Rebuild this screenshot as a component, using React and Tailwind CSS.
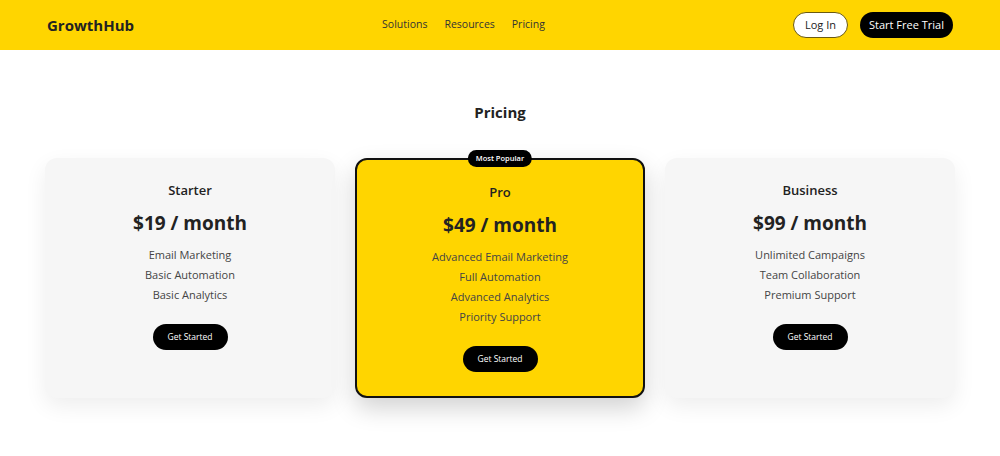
import React from 'react';

const font = { fontFamily: '"Open Sans", "Liberation Sans", sans-serif' };

const plans = [
  {
    name: 'Starter',
    price: '$19 / month',
    features: ['Email Marketing', 'Basic Automation', 'Basic Analytics'],
  },
  {
    name: 'Pro',
    price: '$49 / month',
    features: [
      'Advanced Email Marketing',
      'Full Automation',
      'Advanced Analytics',
      'Priority Support',
    ],
    popular: true,
  },
  {
    name: 'Business',
    price: '$99 / month',
    features: ['Unlimited Campaigns', 'Team Collaboration', 'Premium Support'],
  },
];

const PlanCard = ({ plan }) => {
  const base = plan.popular
    ? 'relative bg-[#ffd500] border-2 border-[#111] rounded-xl shadow-[0_10px_24px_rgba(0,0,0,0.18)] pt-[24px]'
    : 'relative bg-[#f6f6f6] rounded-xl shadow-[0_8px_22px_rgba(0,0,0,0.07)] pt-[24px]';

  return (
    <div className={`${base} flex flex-col items-center px-6 pb-6`}>
      {plan.popular && (
        <span className="absolute -top-[10px] left-1/2 -translate-x-1/2 bg-black text-white text-[7.5px] font-semibold rounded-full px-[8px] py-[3px] leading-[11px]">
          Most Popular
        </span>
      )}
      <h3 className="text-[13px] font-semibold text-[#222] leading-[17px]">
        {plan.name}
      </h3>
      <div className="mt-[10px] text-[19px] font-bold text-[#222] leading-[28px]">
        {plan.price}
      </div>
      <ul className="mt-[8px] flex flex-col items-center">
        {plan.features.map((f) => (
          <li key={f} className="text-[11px] text-[#444] leading-[20px]">
            {f}
          </li>
        ))}
      </ul>
      <button className="mt-[19px] bg-black text-white text-[8.5px] rounded-full w-[75px] h-[26px]">
        Get Started
      </button>
    </div>
  );
};

export default function App() {
  return (
    <div className="min-h-[456px] bg-white" style={font}>
      {/* Header */}
      <header className="h-[50px] bg-[#ffd500] flex items-center justify-between px-[47px]">
        <div className="text-[15px] font-bold text-[#222]">GrowthHub</div>
        <nav className="flex items-center gap-[17px] text-[10.5px] text-[#333]">
          <a>Solutions</a>
          <a>Resources</a>
          <a>Pricing</a>
        </nav>
        <div className="flex items-center gap-[12px]">
          <button className="h-[26px] w-[55px] rounded-full bg-white border border-[#6b5a10] text-[11px] text-[#222]">
            Log In
          </button>
          <button className="h-[26px] w-[93px] rounded-full bg-black text-white text-[11px]">
            Start Free Trial
          </button>
        </div>
      </header>

      {/* Pricing */}
      <section className="pt-[52px] pb-[40px]">
        <h2 className="text-center text-[15px] font-bold text-[#222] leading-[20px]">
          Pricing
        </h2>
        <div className="mt-[36px] mx-auto w-[910px] grid grid-cols-3 gap-[20px]">
          {plans.map((p) => (
            <PlanCard key={p.name} plan={p} />
          ))}
        </div>
      </section>
    </div>
  );
}
